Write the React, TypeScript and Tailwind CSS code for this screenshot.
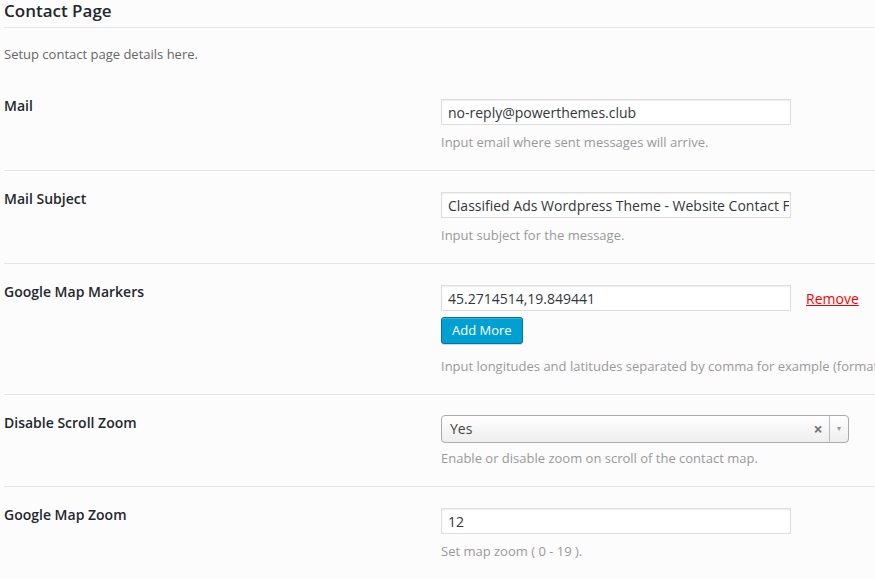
import { ReactNode } from 'react'

type FieldRowProps = {
  label: string
  description: string
  children: ReactNode
  descClass?: string
  last?: boolean
}

function FieldRow({ label, description, children, descClass = 'mt-[7px]', last }: FieldRowProps) {
  return (
    <div className={`ml-[4px] flex ${last ? '' : 'border-b border-[#e5e5e5]'}`}>
      <div className="w-[437px] shrink-0 pt-[19px] text-[14px] leading-[18px] font-semibold text-[#23282d]">
        {label}
      </div>
      <div className="flex-1 pt-[21px] pb-[18px] min-w-0">
        {children}
        <p className={`${descClass} whitespace-nowrap text-[13px] leading-[20px] text-[#999]`}>
          {description}
        </p>
      </div>
    </div>
  )
}

function TextInput({ value }: { value: string }) {
  return (
    <input
      type="text"
      value={value}
      readOnly
      className="block h-[26px] w-[350px] border border-[#ddd] bg-white pl-[6px] pr-[1px] text-[14px] text-[#32373c] shadow-[inset_0_1px_2px_rgba(0,0,0,0.07)] outline-none"
    />
  )
}

export default function App() {
  return (
    <div className="min-h-screen overflow-hidden bg-[#fcfcfc] font-['Open_Sans',sans-serif]">
      {/* Section header */}
      <div className="ml-[4px] border-b border-[#e5e5e5] h-[28px]">
        <h2 className="text-[17px] leading-[22px] font-semibold text-[#23282d]">Contact Page</h2>
      </div>
      <p className="ml-[4px] mt-[16px] mb-[14px] text-[13px] leading-[20px] text-[#666]">
        Setup contact page details here.
      </p>

      <FieldRow label="Mail" description="Input email where sent messages will arrive.">
        <TextInput value="no-reply@powerthemes.club" />
      </FieldRow>

      <FieldRow label="Mail Subject" description="Input subject for the message.">
        <TextInput value="Classified Ads Wordpress Theme - Website Contact Form" />
      </FieldRow>

      <FieldRow
        label="Google Map Markers"
        description="Input longitudes and latitudes separated by comma for example (format: latitude,longitude)."
      >
        <div className="flex items-center">
          <TextInput value="45.2714514,19.849441" />
          <a href="#" className="ml-[15px] text-[14px] text-[#ff0000] underline">
            Remove
          </a>
        </div>
        <button className="mt-[6px] mb-[5px] h-[27px] rounded-[3px] border border-[#0073aa] bg-[#00a0d2] px-[10px] text-[13px] text-white shadow-[inset_0_1px_0_rgba(120,200,230,0.5),0_1px_0_rgba(0,0,0,0.15)]">
          Add More
        </button>
      </FieldRow>

      <FieldRow
        label="Disable Scroll Zoom"
        description="Enable or disable zoom on scroll of the contact map."
        descClass="mt-[5px]"
      >
        <div className="-mt-[1px] flex h-[28px] w-[408px] items-stretch rounded-[4px] border border-[#aaa] bg-gradient-to-b from-white to-[#eee] text-[14px] text-[#444]">
          <span className="flex-1 pl-[8px] leading-[26px]">Yes</span>
          <span className="flex w-[22px] items-center justify-center text-[16px] font-bold text-[#777]">×</span>
          <span className="flex w-[19px] items-center justify-center border-l border-[#bbb] text-[7px] text-[#999]">▼</span>
        </div>
      </FieldRow>

      <FieldRow label="Google Map Zoom" description="Set map zoom ( 0 - 19 )." last>
        <TextInput value="12" />
      </FieldRow>
    </div>
  )
}
